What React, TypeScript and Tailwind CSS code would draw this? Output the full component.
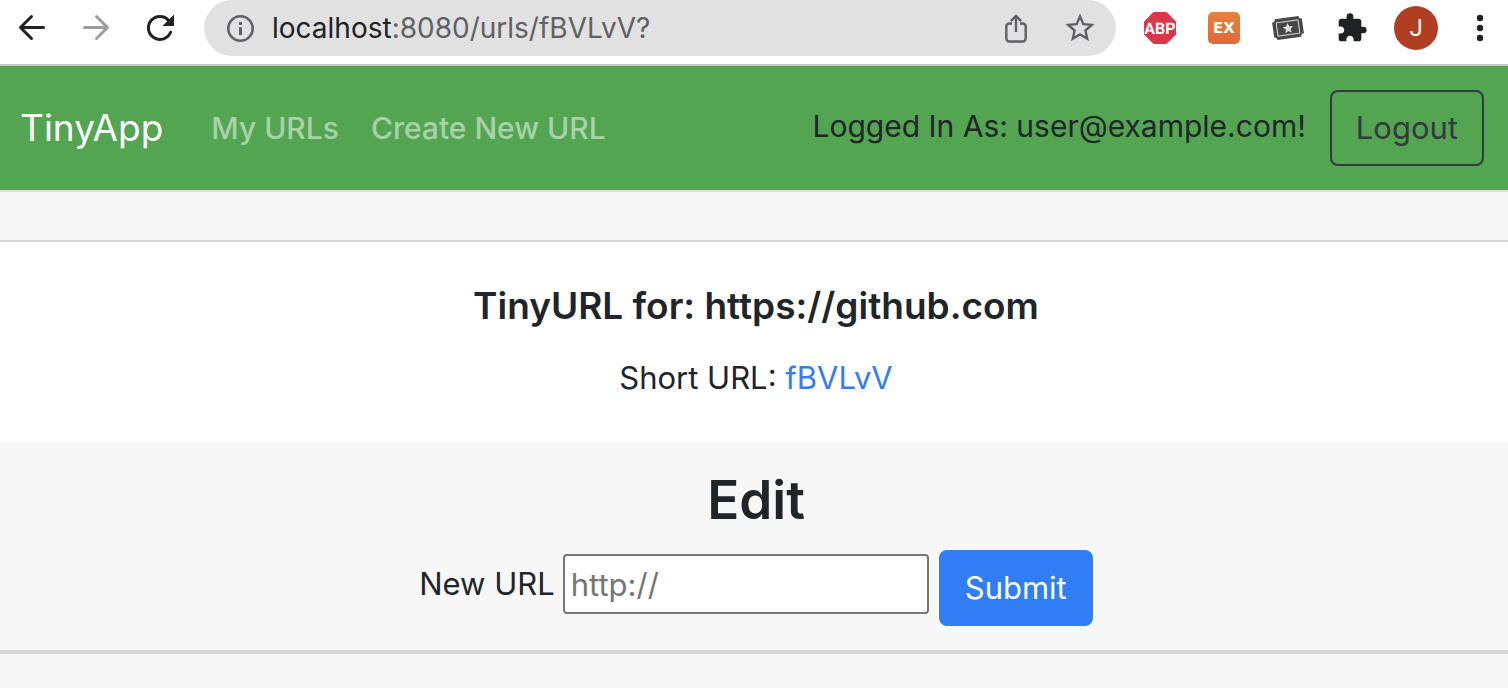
import { MdExtension, MdStarBorder } from "react-icons/md";

function BackIcon() {
  return (
    <svg viewBox="0 0 32 32" className="size-8" fill="none" stroke="currentColor" strokeWidth="3" strokeLinecap="round" strokeLinejoin="round" aria-hidden="true">
      <path d="M27.5 15.5H5M15.500 4.500 4.500 15.500 15.500 26.500" />
    </svg>
  );
}

function ForwardIcon() {
  return (
    <svg viewBox="0 0 32 32" className="size-8" fill="none" stroke="currentColor" strokeWidth="3" strokeLinecap="round" strokeLinejoin="round" aria-hidden="true">
      <path d="M4.500 15.500H27M16.500 4.500 27.500 15.500 16.500 26.500" />
    </svg>
  );
}

function ReloadIcon() {
  return (
    <svg viewBox="0 0 32 32" className="size-8" aria-hidden="true">
      <path d="M26.600 20.200A11.500 11.500 0 1 1 24.600 8.400" fill="none" stroke="currentColor" strokeWidth="3" strokeLinecap="round" />
      <path d="M30 2.500V14H18.500Z" fill="currentColor" />
    </svg>
  );
}

function InfoIcon() {
  return (
    <svg viewBox="0 0 32 32" className="size-8" aria-hidden="true">
      <circle cx="16.500" cy="16.500" r="12.200" fill="none" stroke="currentColor" strokeWidth="2.600" />
      <path d="M15 10h3v3h-3zM15 15.300h3v7.700h-3z" fill="currentColor" />
    </svg>
  );
}

function ShareIcon() {
  return (
    <svg viewBox="0 0 32 32" className="size-8" fill="none" stroke="currentColor" strokeWidth="2.400" aria-hidden="true">
      <path d="M12 11.500H9.300a3 3 0 0 0-3 3V26.500a3 3 0 0 0 3 3H22.700a3 3 0 0 0 3-3V14.500a3 3 0 0 0-3-3H20" />
      <path d="M16 20V4.500M10.800 9.200 16 4l5.200 5.200" />
    </svg>
  );
}

function AdblockIcon() {
  return (
    <svg viewBox="0 0 32 32" className="size-8" aria-hidden="true">
      <path d="M9.500 0h13L32 9.500v13L22.500 32h-13L0 22.500v-13Z" fill="#dd3549" />
      <text x="16" y="22" textAnchor="middle" fontFamily="Roboto, sans-serif" fontWeight="700" fontSize="16" textRendering="geometricPrecision" fill="#fff">ABP</text>
    </svg>
  );
}

function ExIcon() {
  return (
    <svg viewBox="0 0 32 32" className="size-8" aria-hidden="true">
      <defs>
        <linearGradient id="ex-fill" x1="0" y1="0" x2="0" y2="1">
          <stop offset="0" stopColor="#e6813f" />
          <stop offset="1" stopColor="#e06b36" />
        </linearGradient>
      </defs>
      <rect width="32" height="32" rx="5" fill="url(#ex-fill)" />
      <text x="16" y="21" textAnchor="middle" fontFamily="DejaVu Sans, sans-serif" fontWeight="700" fontSize="15" textRendering="geometricPrecision" fill="#fff">EX</text>
    </svg>
  );
}

function TicketIcon() {
  return (
    <svg viewBox="0 0 32 32" className="size-8" aria-hidden="true">
      <g transform="rotate(-8 16 16)">
        <path d="M4 5.500H28a3 3 0 0 0 3 3V23.500a3 3 0 0 0-3 3H4a3 3 0 0 0-3-3V8.500a3 3 0 0 0 3-3Z" fill="#484848" />
        <rect x="5" y="9.300" width="22" height="13.400" fill="none" stroke="#d8d8d8" strokeWidth="1" />
        <path d="m16 11 1.500 3.400 3.700.4-2.800 2.500.8 3.600-3.200-1.900-3.200 1.900.8-3.600-2.800-2.500 3.700-.4Z" fill="#dedede" />
      </g>
    </svg>
  );
}

function MenuIcon() {
  return (
    <svg viewBox="0 0 32 32" className="size-8" fill="currentColor" aria-hidden="true">
      <circle cx="16" cy="6" r="3.200" />
      <circle cx="16" cy="16" r="3.200" />
      <circle cx="16" cy="26" r="3.200" />
    </svg>
  );
}

function BrowserToolbar() {
  return (
    <div className="flex items-start border-b-2 border-[#cacaca] bg-white pb-2 pl-4 pr-3 text-[#202124]">
      <div className="flex h-14 items-center gap-8">
        <button type="button" aria-label="Back"><BackIcon /></button>
        <button type="button" aria-label="Forward" className="text-[#9d9d9d]"><ForwardIcon /></button>
        <button type="button" aria-label="Reload"><ReloadIcon /></button>
      </div>
      <div className="ml-7 flex h-14 min-w-0 flex-1 items-center rounded-full bg-[#e1e1e1] pl-5 pr-5 text-[#5f6064]">
        <button type="button" aria-label="Site information"><InfoIcon /></button>
        <span className="ml-4 min-w-0 flex-1 truncate text-[28px] leading-10">
          <span className="text-[#202124]">localhost</span>:8080/urls/fBVLvV?
        </span>
        <button type="button" aria-label="Share" className="mr-8"><ShareIcon /></button>
        <button type="button" aria-label="Bookmark"><MdStarBorder className="size-8 scale-110" /></button>
      </div>
      <div className="ml-7 flex h-14 items-center gap-8">
        <button type="button" aria-label="Adblock Plus"><AdblockIcon /></button>
        <button type="button" aria-label="EX"><ExIcon /></button>
        <button type="button" aria-label="Tickets"><TicketIcon /></button>
        <button type="button" aria-label="Extensions"><MdExtension className="size-8" /></button>
        <button type="button" aria-label="Profile" className="-mx-1.5 size-11 rounded-full bg-[#b03e20] font-['Roboto',sans-serif] text-2xl text-white">J</button>
        <button type="button" aria-label="Menu"><MenuIcon /></button>
      </div>
    </div>
  );
}

function Header() {
  return (
    <header className="flex items-center border-b-2 border-[#e0dce0] bg-[#53a551] px-6 py-6 pl-5 text-[30px]">
      <a href="#" className="text-[37px] leading-[60px] text-white">TinyApp</a>
      <nav className="ml-12 flex gap-8 font-medium text-white/50">
        <a href="#">My URLs</a>
        <a href="#">Create New URL</a>
      </nav>
      <p className="ml-auto mr-6 pb-1">Logged In As: user@example.com!</p>
      <button type="button" className="h-19 rounded-lg border-2 border-[#343a40] px-6 text-[31px] text-[#343a40]">Logout</button>
    </header>
  );
}

export default function App() {
  return (
    <div className="min-h-screen bg-[#f7f7f7] font-['Inter',sans-serif] text-[31px] leading-12 text-[#212529]">
      <BrowserToolbar />
      <Header />
      <main className="pt-12">
        <section className="border-t-2 border-[#d6d6d6] bg-white pb-10 pl-1 pt-10 text-center">
          <h1 className="text-[37px] font-semibold leading-12">TinyURL for: https://github.com</h1>
          <p className="mt-6">
            Short URL: <a href="#" className="text-[#307df6]">fBVLvV</a>
          </p>
        </section>
        <section className="border-b-4 border-[#d8d8d8] pb-6 pl-1 pt-6 text-center">
          <h2 className="text-[53px] font-semibold leading-[68px]">Edit</h2>
          <form className="mt-4 flex items-center justify-center" onSubmit={(e) => e.preventDefault()}>
            <label htmlFor="new-url" className="mb-2">New URL</label>
            <input id="new-url" type="text" placeholder="http://" className="mb-2 ml-2 h-15 w-[366px] rounded-sm border-2 border-[#767676] bg-white px-1.5 placeholder:text-[#757575]" />
            <button type="submit" className="ml-2.5 h-19 rounded-lg border-2 border-[#307df6] bg-[#307df6] px-6 text-white">Submit</button>
          </form>
        </section>
      </main>
    </div>
  );
}
